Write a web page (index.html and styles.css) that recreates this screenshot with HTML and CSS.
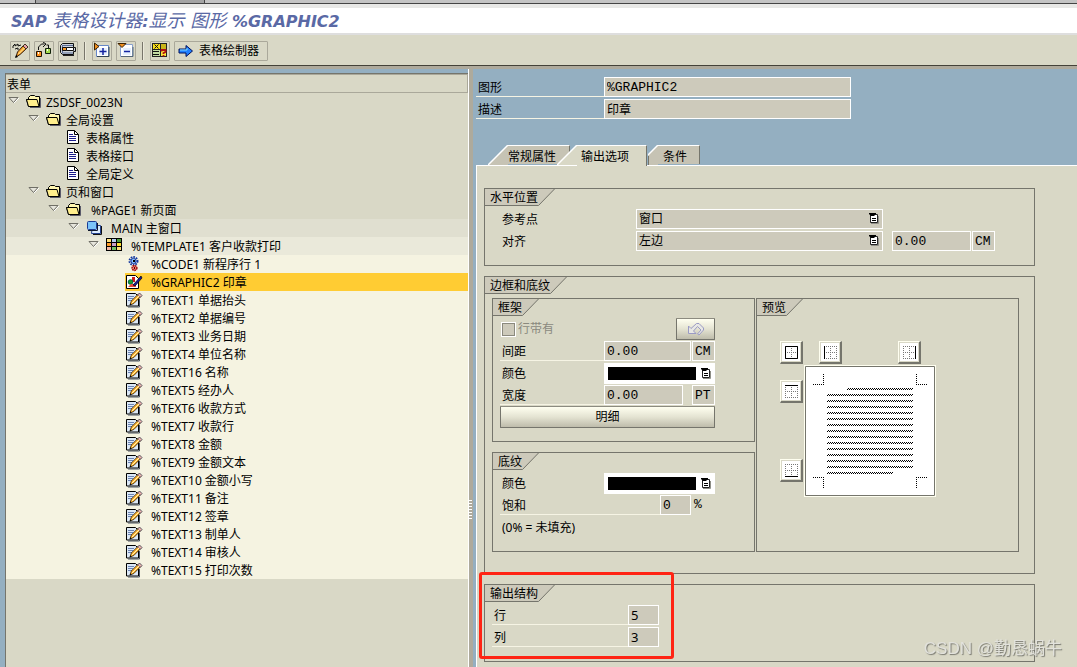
FILE: index.html
```html
<!DOCTYPE html>
<html lang="zh-CN">
<head>
<meta charset="utf-8">
<title>SAP 表格设计器</title>
<link rel="stylesheet" href="styles.css">
</head>
<body>
<svg class="defs" aria-hidden="true">
  <defs>
    <symbol id="i-tri" viewBox="0 0 11 8"><path d="M1 1.500h9L5.500 6.500z" fill="#e6e5dc" stroke="#6f6e66"/><path d="M6 7l5-5" stroke="#fff" fill="none"/></symbol>
    <symbol id="i-folder" viewBox="0 0 16 14"><path d="M2.500 12.500L.5 5.500h2v-2l2-2h4l1 1h4v10z" fill="#fff6b0" stroke="#000"/><path d="M.5 5.500h10.500l2 7H2.500z" fill="#ffee8c" stroke="#000"/><path d="M14.500 4v9.500H4" fill="none" stroke="#5a5a6a"/></symbol>
    <symbol id="i-doc" viewBox="0 0 14 15"><path d="M1.500.5h7l4 4v9h-11z" fill="#fff" stroke="#000"/><path d="M8.500.5v4h4" fill="none" stroke="#000"/><path d="M3 4.500h4M3 6.500h7M3 8.500h7M3 10.500h7" stroke="#1c1c8c"/></symbol>
    <symbol id="i-win" viewBox="0 0 17 16"><path d="M6.500 5.500h8v8h-9z" fill="#dcecff" stroke="#24408c"/><path d="M7 14.500h8.500V6" fill="none" stroke="#111"/><rect x="1.500" y="1.500" width="9" height="8" rx="1" fill="#7cc4fa" stroke="#1c3c94"/><path d="M2 10.500h9.500V3" fill="none" stroke="#10182c"/></symbol>
    <symbol id="i-grid" viewBox="0 0 16 13"><path d="M0 0h16v13H0z"/><path d="M1 1h4v3H1zM11 9h4v3h-4z" fill="#ffe07c"/><path d="M6 1h4v3H6z" fill="#b8cff0"/><path d="M11 1h4v3h-4z" fill="#4c9c3c"/><path d="M1 5h4v3H1z" fill="#ff9c28"/><path d="M6 5h4v3H6z" fill="#c8a0c8"/><path d="M11 5h4v3h-4z" fill="#ffdf30"/><path d="M1 9h4v3H1z" fill="#f4b8a4"/><path d="M6 9h4v3H6z" fill="#74c468"/></symbol>
    <symbol id="i-gear" viewBox="0 0 16 16"><circle cx="7.500" cy="5" r="4" fill="none" stroke="#1438a0" stroke-width="2" stroke-dasharray="1.600 1"/><circle cx="7.500" cy="5" r="2.600" fill="#8cc4ff" stroke="#1438a0"/><path d="M7 4h2v2H7z" fill="#000"/><circle cx="8.500" cy="12" r="2.400" fill="#f08070" stroke="#a00c0c" stroke-width="1.500" stroke-dasharray="1.500 .6"/><path d="M8 11h1v2H8z" fill="#500"/></symbol>
    <symbol id="i-pic" viewBox="0 0 17 16"><path d="M.5 1.500h9l3 3v10H.5z" fill="#fff" stroke="#000"/><path d="M6 3h3v5H6z" fill="#d01818"/><circle cx="4.500" cy="8" r="2.300" fill="#18a028" stroke="#064"/><path d="M2 13l3-3h5v3z" fill="#e84838"/><path d="M7 11l2 1 7-8-1-2z" fill="#18189c" stroke="#000" stroke-width=".7"/></symbol>
    <symbol id="i-text" viewBox="0 0 17 16"><path d="M.5 1.500h9l3 3v9.500H.5z" fill="#dce8f6" stroke="#000"/><path d="M2 4.500h6M2 6.500h5M2 8.500h4" stroke="#6c84b4"/><path d="M2 15h11.500V7" fill="none" stroke="#4a5464"/><path d="M4 13l1.300-4 7-7 2.500 2.500-7 7z" fill="#ffb22c" stroke="#2a1a08" stroke-width=".8"/><path d="M11.500 3l2-2 2.500 2.500-2 2z" fill="#eeb6b0" stroke="#334" stroke-width=".8"/><path d="M6 11l7-7" stroke="#fff4b8"/><path d="M3.500 13.500l1-2 1 1z"/></symbol>
    <symbol id="i-list" viewBox="0 0 10 11"><path d="M2 10.500h7.500V3" fill="none" stroke="#8e8e86"/><path d="M1.500 1.500h7v8h-7z" fill="#fff" stroke="#222"/><path d="M0 0h7v1L5 3H2L0 1z"/><path d="M3 5.500h4M3 7.500h4" stroke="#000"/></symbol>
    <symbol id="i-dots" viewBox="0 0 13 13"><path d="M.5 0v13M6.500 0v13M12.500 0v13M0 .5h13M0 6.500h13M0 12.500h13" fill="none" stroke="#777" stroke-dasharray="1 1"/></symbol>
    <symbol id="i-slope" viewBox="0 0 17 17"><path d="M0 0h17L1 16.500H0z" fill="#cdcabb"/><path d="M0 16.500h.5L16.500 0" fill="none" stroke="#75756c"/></symbol>
    <symbol id="i-tab" viewBox="0 0 20 20"><path d="M0 20L20 0v20z"/><path d="M0 20L19.500.5H20" fill="none" stroke="#fff" stroke-width="1.500"/></symbol>
    <pattern id="wave" width="2" height="2" patternUnits="userSpaceOnUse"><path d="M0 1h1v1H0zM1 0h1v1H1z"/></pattern>
  </defs>
</svg>

<div class="strip"><i></i><i></i><i></i></div>
<header class="title"><h1>SAP <span>表格设计器</span>:<span>显示 图形</span> %GRAPHIC2</h1></header>

<nav class="toolbar" aria-label="工具栏">
  <button class="tool" aria-label="显示/更改"><svg width="18" height="18" viewBox="0 0 18 18"><path d="M2 6V4l2-2v2l3-2v2l3-1M4 7l3-1v2" fill="none" stroke="#111"/><path d="M5 15l1.500-5 6-6.500 3 3-6.500 6z" fill="#ffa82c" stroke="#301808"/><path d="M7.500 12l6-6" stroke="#fff0a8"/><path d="M12 4l2-2 3 3-2 2z" fill="#e8a0a8" stroke="#432"/><path d="M4 16l1-3 2 2z"/></svg></button>
  <button class="tool" aria-label="结构"><svg width="18" height="18" viewBox="0 0 18 18"><path d="M3.500 8V5l3-3h3M8 0l3 2-3 3M13.500 6V3h-2" fill="none" stroke="#111"/><path d="M1.500 9.500h5v5h-5z" fill="#ff9420" stroke="#201000"/><path d="M3 10h1v2H3z" fill="#fff"/><path d="M10.500 6.500h5v5h-5z" fill="#a4dc50" stroke="#102008"/><path d="M12 7h1v2h-1z" fill="#fff"/></svg></button>
  <button class="tool" aria-label="检查"><svg width="18" height="18" viewBox="0 0 18 18"><path d="M1.500 3.500l2-2h11v4h2v4h-2v3h-11l-2-2z" fill="#cdd4dc" stroke="#111"/><path d="M3 3.500h11M3 11h11M3.500 3v8" stroke="#5a6c94"/><path d="M3.500 5.500h4v3h-4z" fill="#ff9c28" stroke="#111"/><path d="M7.500 5.500h7v3h-7z" fill="#fff" stroke="#111"/><path d="M4 13.500h11" stroke="#222"/></svg></button>
  <span class="sep"></span>
  <button class="tool" aria-label="展开"><svg width="18" height="18" viewBox="0 0 18 18"><path d="M3.500 3.500h12v11h-12z" fill="#fff" stroke="#6688c8"/><path d="M4 14.500h12V5" fill="none" stroke="#345"/><path d="M6 6h8v7H6z" fill="#e4efff"/><path d="M10 6v7M6.500 9.500h7" stroke="#1424a0" stroke-width="1.500"/><path d="M1.500 1v7L6 4.500z" fill="#f09020" stroke="#3a2000"/></svg></button>
  <button class="tool" aria-label="折叠"><svg width="18" height="18" viewBox="0 0 18 18"><path d="M3.500 2.500h12v12h-12z" fill="#fff" stroke="#88a0cc"/><path d="M4 14.500h12V5" fill="none" stroke="#567"/><path d="M6 6h8v7H6z" fill="#e4efff"/><path d="M7 9.500h6" stroke="#1424a0" stroke-width="1.500"/><path d="M1 1.500h8L5 5.500z" fill="#f09020" stroke="#3a2000"/></svg></button>
  <span class="sep"></span>
  <button class="tool" aria-label="字段列表"><svg width="18" height="18" viewBox="0 0 18 18"><path d="M1 1h15v14H1z" fill="#222"/><path d="M2 2h7v5H2z" fill="#f8dc18"/><path d="M10 2h5v5h-5z" fill="#c8b418"/><path d="M3.500 2.500l4 4m0-4l-4 4" stroke="#111"/><path d="M2 8h7v6H2z" fill="#c4dca4"/><path d="M2 9.500h6M2 12.500h6" stroke="#111"/><path d="M10 8h5v6h-5z" fill="#f8e438"/><path d="M10.500 9.500V8h4v2l-2 1v1M12.500 13v1.500" fill="none" stroke="#b01010" stroke-width="1.800"/></svg></button>
  <button class="tool wide"><svg width="18" height="18" viewBox="0 0 18 18"><path d="M2 7h7V3.500L15.500 9 9 14.500V11H2z" fill="#2080ff" stroke="#00105c"/><path d="M3 8h7V6" fill="none" stroke="#7cd8ff"/></svg>表格绘制器</button>
</nav>

<main class="work">
  <section class="tree">
    <h2>表单</h2>
    <ul>
      <li class="l0"><span class="tg"><svg width="11" height="8"><use href="#i-tri"/></svg></span><span class="nd"><svg width="16" height="14"><use href="#i-folder"/></svg>ZSDSF_0023N</span></li>
      <li class="l1"><span class="tg"><svg width="11" height="8"><use href="#i-tri"/></svg></span><span class="nd"><svg width="16" height="14"><use href="#i-folder"/></svg>全局设置</span></li>
      <li class="l2"><span class="tg"></span><span class="nd"><svg width="14" height="15"><use href="#i-doc"/></svg>表格属性</span></li>
      <li class="l2"><span class="tg"></span><span class="nd"><svg width="14" height="15"><use href="#i-doc"/></svg>表格接口</span></li>
      <li class="l2"><span class="tg"></span><span class="nd"><svg width="14" height="15"><use href="#i-doc"/></svg>全局定义</span></li>
      <li class="l1"><span class="tg"><svg width="11" height="8"><use href="#i-tri"/></svg></span><span class="nd"><svg width="16" height="14"><use href="#i-folder"/></svg>页和窗口</span></li>
      <li class="l2"><span class="tg"><svg width="11" height="8"><use href="#i-tri"/></svg></span><span class="nd far"><svg width="16" height="14"><use href="#i-folder"/></svg>%PAGE1 新页面</span></li>
      <li class="l3"><span class="tg"><svg width="11" height="8"><use href="#i-tri"/></svg></span><span class="nd far"><svg width="17" height="16"><use href="#i-win"/></svg>MAIN 主窗口</span></li>
      <li class="l4"><span class="tg"><svg width="11" height="8"><use href="#i-tri"/></svg></span><span class="nd far"><svg width="16" height="13"><use href="#i-grid"/></svg>%TEMPLATE1 客户收款打印</span></li>
      <li class="l5"><span class="tg"></span><span class="nd far"><svg width="16" height="16"><use href="#i-gear"/></svg>%CODE1 新程序行 1</span></li>
      <li class="l5"><span class="tg"></span><span class="nd far on"><svg width="17" height="16"><use href="#i-pic"/></svg>%GRAPHIC2 印章</span></li>
      <li class="l5"><span class="tg"></span><span class="nd far"><svg width="17" height="16"><use href="#i-text"/></svg>%TEXT1 单据抬头</span></li>
      <li class="l5"><span class="tg"></span><span class="nd far"><svg width="17" height="16"><use href="#i-text"/></svg>%TEXT2 单据编号</span></li>
      <li class="l5"><span class="tg"></span><span class="nd far"><svg width="17" height="16"><use href="#i-text"/></svg>%TEXT3 业务日期</span></li>
      <li class="l5"><span class="tg"></span><span class="nd far"><svg width="17" height="16"><use href="#i-text"/></svg>%TEXT4 单位名称</span></li>
      <li class="l5"><span class="tg"></span><span class="nd far"><svg width="17" height="16"><use href="#i-text"/></svg>%TEXT16 名称</span></li>
      <li class="l5"><span class="tg"></span><span class="nd far"><svg width="17" height="16"><use href="#i-text"/></svg>%TEXT5 经办人</span></li>
      <li class="l5"><span class="tg"></span><span class="nd far"><svg width="17" height="16"><use href="#i-text"/></svg>%TEXT6 收款方式</span></li>
      <li class="l5"><span class="tg"></span><span class="nd far"><svg width="17" height="16"><use href="#i-text"/></svg>%TEXT7 收款行</span></li>
      <li class="l5"><span class="tg"></span><span class="nd far"><svg width="17" height="16"><use href="#i-text"/></svg>%TEXT8 金额</span></li>
      <li class="l5"><span class="tg"></span><span class="nd far"><svg width="17" height="16"><use href="#i-text"/></svg>%TEXT9 金额文本</span></li>
      <li class="l5"><span class="tg"></span><span class="nd far"><svg width="17" height="16"><use href="#i-text"/></svg>%TEXT10 金额小写</span></li>
      <li class="l5"><span class="tg"></span><span class="nd far"><svg width="17" height="16"><use href="#i-text"/></svg>%TEXT11 备注</span></li>
      <li class="l5"><span class="tg"></span><span class="nd far"><svg width="17" height="16"><use href="#i-text"/></svg>%TEXT12 签章</span></li>
      <li class="l5"><span class="tg"></span><span class="nd far"><svg width="17" height="16"><use href="#i-text"/></svg>%TEXT13 制单人</span></li>
      <li class="l5"><span class="tg"></span><span class="nd far"><svg width="17" height="16"><use href="#i-text"/></svg>%TEXT14 审核人</span></li>
      <li class="l5"><span class="tg"></span><span class="nd far"><svg width="17" height="16"><use href="#i-text"/></svg>%TEXT15 打印次数</span></li>
    </ul>
  </section>

  <div class="splitter"><i></i></div>

  <section class="detail">
    <div class="head">
      <div class="row"><label class="lb line w128" for="f-name">图形</label><input id="f-name" class="fld w247 mono" value="%GRAPHIC2" readonly></div>
      <div class="row"><label class="lb line w128" for="f-desc">描述</label><input id="f-desc" class="fld w247" value="印章" readonly></div>
    </div>

    <div class="tabs" role="tablist">
      <button class="tab" role="tab"><svg width="20" height="20"><use href="#i-tab"/></svg><span>常规属性</span></button>
      <button class="tab cur" role="tab" aria-selected="true"><svg width="20" height="20"><use href="#i-tab"/></svg><span>输出选项</span></button>
      <button class="tab last" role="tab"><svg width="10" height="20" viewBox="0 0 10 20"><path d="M0 10L10 0v20H0z"/><path d="M0 10L9.500.5H10" fill="none" stroke="#fff" stroke-width="1.500"/><path d="M.5 11v9" stroke="#75756c"/></svg><span>条件</span></button>
    </div>

    <div class="panel">
      <section class="group">
        <h3><span>水平位置</span><svg width="17" height="17"><use href="#i-slope"/></svg></h3>
        <div class="rows deep">
          <div class="row"><label class="lb w136" for="f-ref">参考点</label><span class="pick w247"><select id="f-ref" class="fld"><option>窗口</option></select><svg width="10" height="11"><use href="#i-list"/></svg></span></div>
          <div class="row"><label class="lb w136" for="f-al">对齐</label><span class="pick w247"><select id="f-al" class="fld"><option>左边</option></select><svg width="10" height="11"><use href="#i-list"/></svg></span><input class="fld mono w79 after" aria-label="对齐值" value="0.00" readonly><input class="fld mono unit near" aria-label="对齐单位" value="CM" readonly></div>
        </div>
      </section>

      <section class="group outer">
        <h3><span>边框和底纹</span><svg width="17" height="17"><use href="#i-slope"/></svg></h3>
        <div class="cols">
          <div class="stack">
            <section class="group frame">
              <h3><span>框架</span><svg width="17" height="17"><use href="#i-slope"/></svg></h3>
              <div class="rows">
                <div class="row split"><label class="chk"><input type="checkbox" disabled>行带有</label><button class="btn undo" aria-label="撤销" disabled><svg width="18" height="14" viewBox="0 0 18 14"><path d="M1.500 4v7.500H9L6.500 9l4-4.500L14 8l-3.500 4 1.500 1 4.500-5v-2L12 1.500H9.500L4 6.500z" fill="#e8e8e4" stroke="#9a9ac4"/></svg></button></div>
                <div class="row"><label class="lb line w104" for="f-sp">间距</label><input id="f-sp" class="fld mono w87" value="0.00" readonly><input class="fld mono unit near" aria-label="间距单位" value="CM" readonly></div>
                <div class="row"><span class="lb w104">颜色</span><button class="color" aria-label="框架颜色"><i></i><svg width="10" height="11"><use href="#i-list"/></svg></button></div>
                <div class="row"><label class="lb line w104" for="f-wd">宽度</label><input id="f-wd" class="fld mono w79" value="0.00" readonly><input class="fld mono unit after" aria-label="宽度单位" value="PT" readonly></div>
                <button class="btn more">明细</button>
              </div>
            </section>
            <section class="group shade">
              <h3><span>底纹</span><svg width="17" height="17"><use href="#i-slope"/></svg></h3>
              <div class="rows">
                <div class="row"><span class="lb w104">颜色</span><button class="color" aria-label="底纹颜色"><i></i><svg width="10" height="11"><use href="#i-list"/></svg></button></div>
                <div class="row"><label class="lb line w160" for="f-sat">饱和</label><input id="f-sat" class="fld mono w31" value="0" readonly><span class="mono pct">%</span></div>
                <div class="row"><span class="lb">(0% = 未填充)</span></div>
              </div>
            </section>
          </div>
          <section class="group preview">
            <h3><span>预览</span><svg width="17" height="17"><use href="#i-slope"/></svg></h3>
            <div class="board">
              <button class="edge" aria-label="全部边框"><svg width="13" height="13"><use href="#i-dots"/><path d="M.5.5h12v12H.5z" fill="none" stroke="#000"/></svg></button>
              <div class="top">
                <button class="edge" aria-label="左边框"><svg width="13" height="13"><use href="#i-dots"/><path d="M.5 0v13" stroke="#000"/></svg></button>
                <button class="edge" aria-label="右边框"><svg width="13" height="13"><use href="#i-dots"/><path d="M12.500 0v13" stroke="#000"/></svg></button>
              </div>
              <div class="side">
                <button class="edge" aria-label="上边框"><svg width="13" height="13"><use href="#i-dots"/><path d="M0 .5h13" stroke="#000"/></svg></button>
                <button class="edge" aria-label="下边框"><svg width="13" height="13"><use href="#i-dots"/><path d="M0 12.500h13" stroke="#000"/></svg></button>
              </div>
              <svg class="sheet" width="132" height="132" viewBox="0 0 132 132">
                <path d="M0 0h132v132H0z" fill="#fffff0"/><path d="M1.500 1.500h129v129H1.500z" fill="#fff" stroke="#75756c"/>
                <path d="M19.500 9v11M9 19.500h11M112.500 9v11M112 19.500h11M9 112.500h11M19.500 112v11M112 112.500h11M112.500 112v11" fill="none" stroke="#000" stroke-dasharray="1 1"/>
                <path fill="url(#wave)" d="M43 23h66v2H43zM23 29h86v2H23zM23 35h86v2H23zM23 41h86v2H23zM23 47h86v2H23zM23 53h86v2H23zM23 59h86v2H23zM23 65h86v2H23zM23 71h86v2H23zM23 77h86v2H23zM23 83h86v2H23zM23 89h86v2H23zM23 95h86v2H23zM23 101h86v2H23zM23 107h66v2H23z"/>
              </svg>
            </div>
          </section>
        </div>
      </section>

      <section class="group output">
        <h3><span>输出结构</span><svg width="17" height="17"><use href="#i-slope"/></svg></h3>
        <div class="rows">
          <div class="row"><label class="lb line w136" for="f-r">行</label><input id="f-r" class="fld w31 num" value="5" readonly></div>
          <div class="row"><label class="lb line w136" for="f-c">列</label><input id="f-c" class="fld w31 num" value="3" readonly></div>
        </div>
        <div class="mark"></div>
      </section>
    </div>
  </section>
</main>
<div class="watermark">CSDN @勤恳蜗牛</div>
</body>
</html>
```

FILE: styles.css
```css
* { box-sizing: border-box; }

body {
  margin: 0;
  height: 100vh;
  display: flex;
  flex-direction: column;
  overflow: hidden;
  background: #d9d8c6;
  color: #000;
  font: 12px/18px "Noto Sans", "Noto Sans CJK SC", sans-serif;
}

.defs { position: absolute; width: 0; height: 0; }
svg { flex: none; display: block; }
button, input, select { font: inherit; color: inherit; margin: 0; border-radius: 0; }
button { padding: 0; }
h1, h2, h3, ul { margin: 0; padding: 0; font: inherit; list-style: none; }

.strip {
  flex: none;
  display: grid;
  grid-template-columns: 35px 168px 1fr;
  gap: 1px;
  height: 8px;
  border-bottom: 4px solid #e8e8e6;
  background: #444;
}
.strip i { height: 3px; background: #c4c4c4; }
.strip i:nth-child(2) { background: #a4a4a4; }

.title {
  flex: none;
  height: 27px;
  padding-left: 11px;
  background: #fff;
  border-bottom: 2px solid #dedede;
}
.title h1 {
  color: #5a69a5;
  font: italic 700 16px/25px "DejaVu Sans", "Noto Sans CJK SC", sans-serif;
  white-space: nowrap;
}
.title span { font-size: 18px; font-weight: 400; }

.toolbar {
  flex: none;
  display: flex;
  align-items: center;
  gap: 4px;
  height: 31px;
  padding: 2px 10px 0;
  border-bottom: 1px solid #444239;
  box-shadow: 0 3px 0 #aeaa9c;
  z-index: 1;
}
.tool {
  display: flex;
  align-items: center;
  justify-content: center;
  width: 20px;
  height: 20px;
  background: #d9d8c6;
  border: 1px solid #aaa89a;
  border-radius: 1px;
}
.wide { width: auto; padding: 0 8px 0 2px; gap: 4px; }
.sep { width: 2px; height: 18px; margin: 0 2px; border-left: 1px solid #77756a; background: #eceadb; }

.work {
  flex: 1;
  min-height: 0;
  display: flex;
  background: #94afc1;
  padding: 3px 0 0 5px;
}

.tree {
  flex: 0 0 463px;
  margin-top: 4px;
  background: #d9d8c6;
  border-left: 1px solid #75756c;
  border-top: 1px solid #75756c;
  overflow: hidden;
}
.tree h2 {
  height: 19px;
  padding-left: 1px;
  line-height: 19px;
  border: 1px solid #aaa89a;
  border-width: 1px 1px 1px 0;
}
.tree li { display: flex; height: 18px; background: #d9d8c6; }
.tree .l1 { padding-left: 20px; }
.tree .l2 { padding-left: 40px; }
.tree .l3 { padding-left: 60px; background: #e0dfd0; }
.tree .l4 { padding-left: 80px; background: #eae9da; }
.tree .l5 { padding-left: 100px; background: #f5f3e1; }
.tg { flex: none; width: 19px; padding: 3px 0 0 2px; }
.nd { flex: 1; display: grid; grid-template-columns: 20px 1fr; padding-left: 1px; white-space: nowrap; line-height: 19px; }
.nd svg { margin-top: 1px; }
.far { grid-template-columns: 25px 1fr; }
.on { background: #fc3; }

.splitter {
  flex: none;
  display: flex;
  align-items: center;
  width: 8px;
  padding-top: 284px;
  border-left: 1px solid #fff;
  background: linear-gradient(90deg, #aeaa9c 4px, #94afc1 4px);
}
.splitter i { width: 3px; height: 20px; background: repeating-linear-gradient(#fff 0 1px, #aeaa9c 1px 3px); }

.detail { flex: 1; min-width: 0; display: flex; flex-direction: column; }
.head { display: grid; gap: 2px; padding-top: 8px; }
.row { display: flex; height: 20px; }
.rows { display: grid; gap: 2px; padding: 3px 7px 0; }
.deep { padding-left: 15px; }
.lb { padding-left: 2px; line-height: 22px; white-space: nowrap; }
.line { border-bottom: 1px solid #f6f4e4; }
.w104 { width: 104px; }
.w128 { width: 128px; }
.w136 { width: 136px; }
.w160 { width: 160px; }

.fld {
  height: 20px;
  min-width: 0;
  padding: 0 2px;
  border: 1px solid #fff;
  outline: 0;
  background: #cdcabb;
  line-height: 18px;
}
.mono { font-family: "Liberation Mono", "Noto Sans CJK SC", monospace; font-size: 13px; }
.w247 { width: 247px; }
.w79 { width: 79px; }
.w87 { width: 87px; }
.w31 { width: 31px; }
.unit { width: 23px; }
.near { margin-left: 1px; }
.after { margin-left: 9px; }
.num { font-size: 13px; }
.pct { margin-left: 3px; line-height: 20px; }

.pick { position: relative; display: block; height: 20px; }
.pick select { appearance: none; width: 100%; }
.pick svg { position: absolute; right: 4px; top: 4px; pointer-events: none; }

.tabs { display: flex; height: 20px; margin: 26px 0 0 12px; }
.tab { display: flex; border: 0; background: none; fill: #c6c3b4; height: 20px; }
.tab span {
  height: 19px;
  padding: 0 13px 0 0;
  line-height: 21px;
  background: #c6c3b4;
  border-top: 1px solid #fff;
  border-right: 1px solid #75756c;
  white-space: nowrap;
}
.cur { margin-left: -13px; z-index: 1; fill: #d9d8c6; }
.cur span { height: 21px; padding: 0 17px 0 4px; background: #d9d8c6; }
.last { margin-left: 1px; }
.last span { padding: 0 12px 0 5px; }

.panel {
  flex: 1;
  display: flex;
  flex-direction: column;
  gap: 10px;
  padding: 22px 42px 0 7px;
  background: #d9d8c6;
  border: 1px solid #fff;
  border-width: 1px 0 0 1px;
}
.group { flex: none; height: 78px; border: 1px solid #75756c; }
.group h3 { display: flex; height: 17px; }
.group h3 span { padding: 0 0 0 5px; height: 17px; line-height: 17px; background: #cdcabb; border-bottom: 1px solid #75756c; }
.outer { height: 298px; }
.cols { display: grid; grid-template-columns: 263px minmax(0, 1fr); gap: 1px; padding: 4px 15px 0 7px; }
.stack { display: grid; gap: 10px; }
.frame { height: 144px; }
.shade { height: 100px; }
.preview { height: 254px; }

.split { justify-content: space-between; align-items: center; padding-right: 32px; }
.chk { display: flex; align-items: center; gap: 2px; color: #8a897e; }
.chk input { appearance: none; width: 15px; height: 15px; margin: 0 0 0 1px; background: #cdcabb; border: 1px solid #fff; outline: 1px solid #8a897e; outline-offset: -2px; }
.btn {
  display: flex;
  align-items: center;
  justify-content: center;
  border: 1px solid #75756c;
  border-top-color: #8c8b80;
  border-radius: 1px;
  background: linear-gradient(#fffff0, #e4e3d2 50%, #bebcab);
}
.undo { width: 39px; height: 22px; }
.more { width: 215px; height: 22px; margin-top: -1px; }
.color { display: flex; align-items: center; gap: 5px; width: 111px; height: 21px; padding: 0 4px; background: #fff; border: 0; }
.color i { width: 88px; height: 13px; background: #000; }

.board { display: grid; grid-template-columns: 24px 132px; grid-template-rows: 24px 132px; margin: 25px 0 0 23px; }
.edge {
  display: flex;
  align-items: center;
  justify-content: center;
  width: 23px;
  height: 23px;
  border: 1px solid #fffff0;
  border-right: 2px solid #75756c;
  border-bottom: 2px solid #75756c;
  background: #fff;
  box-shadow: inset 0 0 0 1px #d9d8c6;
}
.top { display: flex; justify-content: space-between; padding: 0 15px; }
.side { display: flex; flex-direction: column; justify-content: space-between; padding: 15px 0; }

.output { position: relative; }
.mark {
  position: absolute;
  left: -6px;
  top: -13px;
  width: 195px;
  height: 87px;
  border: 3px solid #ff2414;
  border-radius: 3px;
}

.watermark {
  position: fixed;
  right: 15px;
  bottom: 6px;
  color: #e2e2dc;
  font: 17px/24px "Liberation Sans", "Noto Sans CJK SC", sans-serif;
  text-shadow: 1px 1px 1px #77776f;
}
```
